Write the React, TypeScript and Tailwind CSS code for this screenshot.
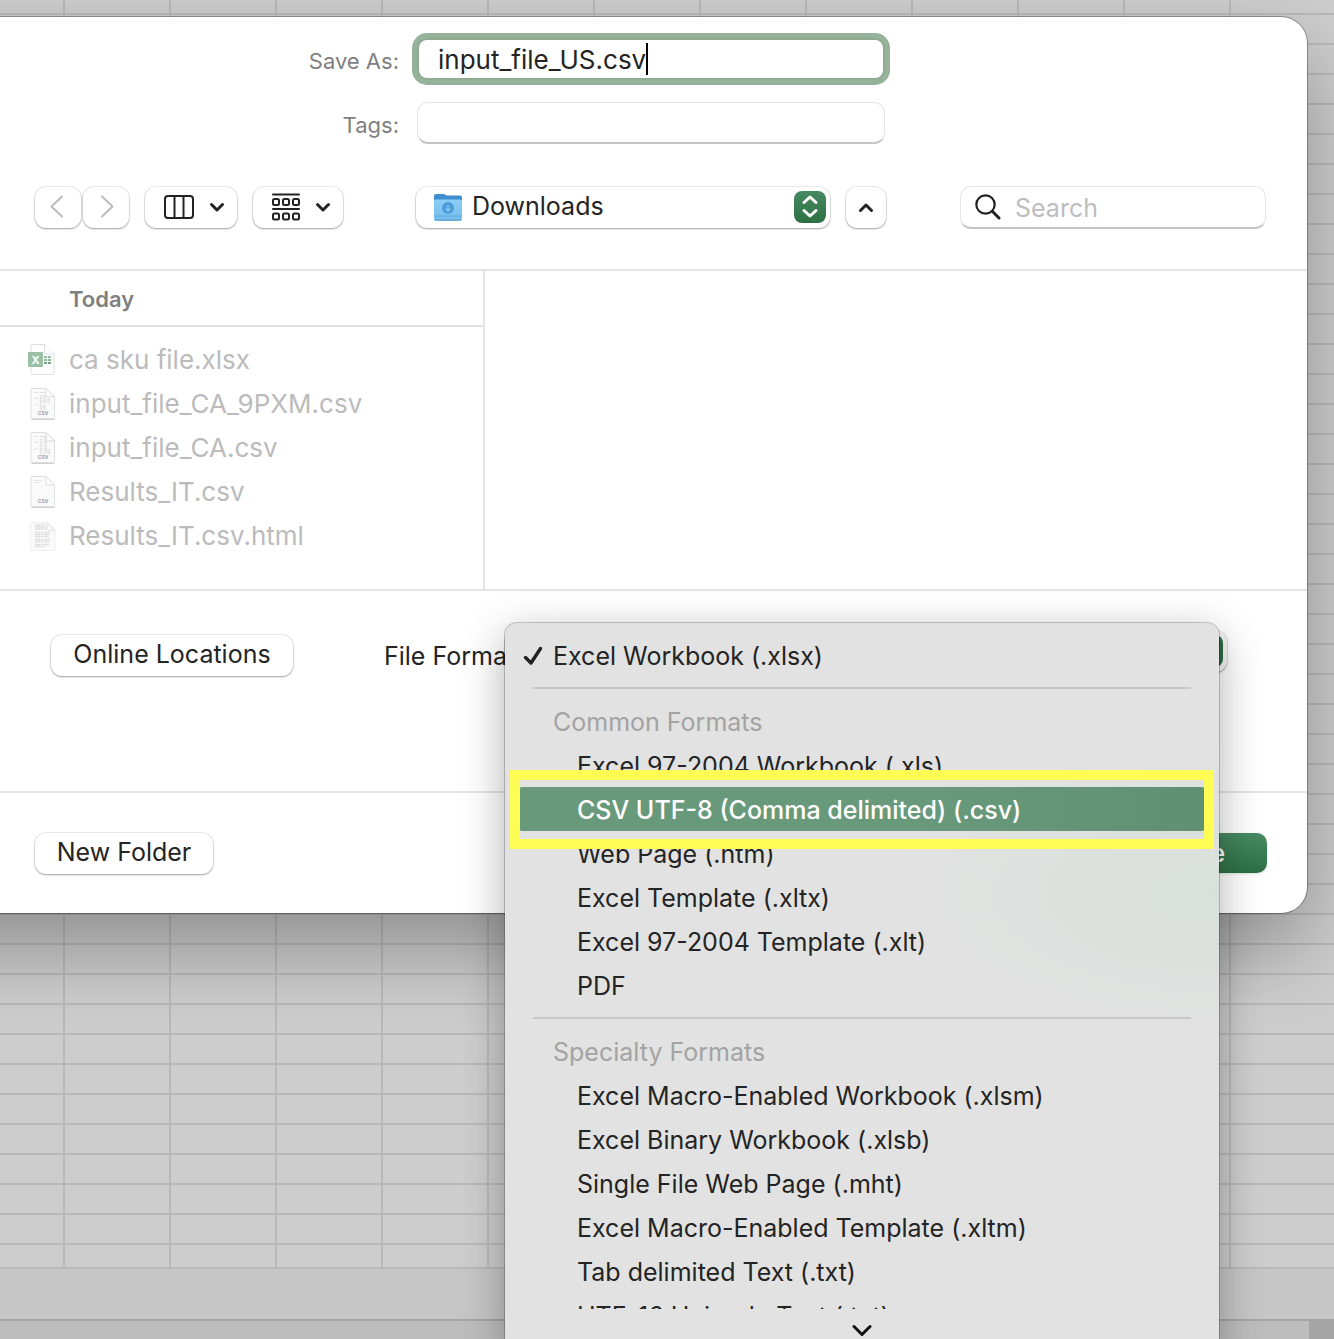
import React from "react";

const cardShadow =
  "shadow-[0_0_0_1px_rgba(0,0,0,0.07),0_1px_2px_rgba(0,0,0,0.32)]";
const fieldBorder =
  "rounded-[11px] border border-[#e6e6e6] border-b-2 border-b-[#c4c4c4] bg-white";

function Chevron({ d, w, h, sw, color }: { d: string; w: number; h: number; sw: number; color: string }) {
  return (
    <svg width={w} height={h} viewBox={`0 0 ${w} ${h}`} fill="none" stroke={color} strokeWidth={sw} strokeLinecap="round" strokeLinejoin="round" aria-hidden="true">
      <path d={d} />
    </svg>
  );
}

function DownChevron() {
  return <Chevron d="M2.500 2.500 8 8l5.500-5.500" w={16} h={11} sw={3} color="#222" />;
}

function ColumnsIcon() {
  return (
    <svg width="30" height="24" viewBox="0 0 30 24" fill="none" stroke="#222" strokeWidth="2" aria-hidden="true">
      <rect x="1" y="1" width="28" height="22" rx="3" />
      <path d="M10.500 1v22M19.500 1v22" />
    </svg>
  );
}

function GroupIcon() {
  return (
    <svg width="28" height="28" viewBox="0 0 28 28" fill="none" stroke="#222" strokeWidth="2" strokeLinecap="round" aria-hidden="true">
      <path d="M1 1.500h26M1 16h26" />
      {[1, 11, 21].map((x) => (
        <React.Fragment key={x}>
          <rect x={x} y="6" width="6" height="6" rx="1.500" />
          <rect x={x} y="20.500" width="6" height="6" rx="1.500" />
        </React.Fragment>
      ))}
    </svg>
  );
}

function FolderIcon() {
  return (
    <svg width="30" height="29" viewBox="0 0 30 29" aria-hidden="true">
      <defs>
        <linearGradient id="folder" x1="0" y1="0" x2="0" y2="1">
          <stop offset="0" stopColor="#8bcdf5" />
          <stop offset="1" stopColor="#74bdec" />
        </linearGradient>
      </defs>
      <path d="M1 3a2 2 0 0 1 2-2h7.500c1.500 0 2 1.500 3.500 1.500h13a2 2 0 0 1 2 2V10H1z" fill="#3f8fd0" />
      <path d="M1 8.500Q1 6.500 3 6.500H27Q29 6.500 29 8.500V26a1.500 1.500 0 0 1-1.500 1.500h-25A1.500 1.500 0 0 1 1 26z" fill="url(#folder)" />
      <path d="M1.500 23h27" stroke="#5ea9dc" strokeWidth="1" />
      <path d="M2 27.200h26" stroke="#4c93c4" strokeWidth="1" />
      <circle cx="15" cy="15" r="6" fill="#4b9bdb" />
      <path d="M15 11.800v6M12.600 15.500 15 18l2.400-2.500" fill="none" stroke="#85c5f0" strokeWidth="1.400" />
    </svg>
  );
}

function SearchIcon() {
  return (
    <svg width="26" height="26" viewBox="0 0 26 26" fill="none" stroke="#222" aria-hidden="true">
      <circle cx="10.500" cy="10.500" r="9.200" strokeWidth="2.200" />
      <path d="M17.300 17.300 24 24" strokeWidth="3" strokeLinecap="round" />
    </svg>
  );
}

type Kind = "xlsx" | "csv-a" | "csv-b" | "csv-c" | "html";

function FileIcon({ kind }: { kind: Kind }) {
  if (kind === "xlsx") {
    return (
      <svg width="29" height="34" viewBox="0 0 29 34" aria-hidden="true">
        <path d="M5 1.500h12.500L27 11v19.500a1 1 0 0 1-1 1H5a1 1 0 0 1-1-1v-28a1 1 0 0 1 1-1z" fill="#fff" stroke="#dedede" />
        <path d="M17.500 1.500V9q0 2 2 2H27" fill="#fff" stroke="#dedede" />
        <g fill="#8fbb9d">
          <path d="M17 13h3v2h-3zM21 13h3v2h-3zM17 16h3v2h-3zM21 16h3v2h-3z" />
          <path d="M17 19h3v2h-3zM21 19h3v2h-3z" fill="#7a9f88" />
        </g>
        <rect x="1" y="9" width="15" height="15" rx="1" fill="#9bc0a6" />
        <text x="8.500" y="20.500" textAnchor="middle" fontFamily="Inter" fontWeight="700" fontSize="11" fill="#fff">X</text>
      </svg>
    );
  }
  if (kind === "html") {
    return (
      <svg width="29" height="34" viewBox="0 0 29 34" aria-hidden="true">
        <path d="M5 3.500h15L28 11v19a1.500 1.500 0 0 1-1.500 1.500H5A1.500 1.500 0 0 1 3.500 30V5A1.500 1.500 0 0 1 5 3.500z" fill="#fafafa" stroke="#efefef" />
        <path d="M20 4v5.500q0 1.500 1.500 1.500h6z" fill="#fff" stroke="#e0e0e0" />
        <g stroke="#e0e0e0" strokeWidth="1.400" strokeDasharray="5 0.600 3 0.500">
          <path d="M8 6h10M8 8h11M8 10h11M8 13.500h15.500M8 15.500h15M8 17.500h14M8 20.500h15.500M8 22.500h15M8 25.500h15M8 27.500h10" />
        </g>
      </svg>
    );
  }
  return (
    <svg width="29" height="34" viewBox="0 0 29 34" aria-hidden="true">
      <path d="M4.500 32.200h23" stroke="#c4c4c4" strokeWidth="1.200" />
      <path d="M5 1.500H19L27.500 10v20.500a1 1 0 0 1-1 1H5a1 1 0 0 1-1-1v-28a1 1 0 0 1 1-1z" fill="#fafafa" stroke="#e0e0e0" />
      <path d="M19 1.500V9q0 1 1 1H27.500z" fill="#fff" stroke="#dadada" />
      <g stroke="#e0e0e0" strokeWidth="1.200">
        {kind === "csv-c" ? (
          <path d="M7.500 5.500h7M7.500 7.500h6" strokeDasharray="3 1" />
        ) : (
          <>
            <path d="M7.500 5.500h4M7.500 11.500h3M7.500 18h3M13 5.500h5" />
            <path d="M14 8v15" strokeWidth="2.500" strokeDasharray="1.500 0.700" />
            <path d={kind === "csv-a" ? "M17.500 8v8M21.500 12v4M17.500 18v5" : "M18.500 5v7M18.500 12v11M22 18v5"} strokeWidth="3" strokeDasharray="1.500 0.700" />
          </>
        )}
      </g>
      <text x="16" y="28" textAnchor="middle" fontFamily="Inter" fontWeight="600" fontSize="5" fill="#8e8e8e">CSV</text>
    </svg>
  );
}

const files: { name: string; kind: Kind }[] = [
  { name: "ca sku file.xlsx", kind: "xlsx" },
  { name: "input_file_CA_9PXM.csv", kind: "csv-a" },
  { name: "input_file_CA.csv", kind: "csv-b" },
  { name: "Results_IT.csv", kind: "csv-c" },
  { name: "Results_IT.csv.html", kind: "html" },
];

const selectedFormat = "CSV UTF-8 (Comma delimited) (.csv)";
const groups = [
  {
    title: "Common Formats",
    items: [
      "Excel 97-2004 Workbook (.xls)",
      selectedFormat,
      "Web Page (.htm)",
      "Excel Template (.xltx)",
      "Excel 97-2004 Template (.xlt)",
      "PDF",
    ],
  },
  {
    title: "Specialty Formats",
    items: [
      "Excel Macro-Enabled Workbook (.xlsm)",
      "Excel Binary Workbook (.xlsb)",
      "Single File Web Page (.mht)",
      "Excel Macro-Enabled Template (.xltm)",
      "Tab delimited Text (.txt)",
      "UTF-16 Unicode Text (.txt)",
    ],
  },
];

function Sheet() {
  return (
    <div aria-hidden="true" className="absolute inset-0 flex flex-col bg-[#bdbdbd]">
      <div className="flex-1 border-b-2 border-[#b9b9b9] bg-[#cdcdcd] [background-image:repeating-linear-gradient(to_bottom,transparent_0_13px,#b9b9b9_13px_15px,transparent_15px_30px),repeating-linear-gradient(to_right,transparent_0_63px,#b9b9b9_63px_65px,transparent_65px_106px)]" />
      <div className="h-[50px] bg-[#c6c6c6]" />
      <div className="flex h-5 justify-end border-t-2 border-[#a5a5a5]">
        <div className="w-[25px] bg-[#a5a5a5]" />
      </div>
    </div>
  );
}

const menuRow = "flex h-11 w-full items-center pt-[2px] text-left";

function FormatMenu() {
  return (
    <div
      role="menu"
      aria-label="File Format"
      className="absolute -top-2 left-0 z-10 flex h-[726px] w-[714px] flex-col rounded-t-[12px] bg-[#e2e2e2] bg-[radial-gradient(ellipse_340px_150px_at_100%_270px,#d9e0db,transparent)] pt-[10px] shadow-[0_0_0_1px_rgba(0,0,0,0.2),0_12px_44px_rgba(0,0,0,0.32)]"
    >
      <div className="h-[676px] overflow-hidden">
        <button type="button" role="menuitemradio" aria-checked="true" className={`pl-[18px] ${menuRow}`}>
          <svg width="20" height="20" viewBox="0 0 20 20" fill="none" stroke="#222" strokeWidth="3.400" strokeLinecap="round" strokeLinejoin="round" aria-hidden="true">
            <path d="M2.500 11.500 8 17 17.500 2.500" />
          </svg>
          <span className="ml-[10px]">Excel Workbook (.xlsx)</span>
        </button>
        {groups.map((g) => (
          <div key={g.title} role="group" aria-label={g.title}>
            <div className="mx-7 my-[10px] h-[2px] bg-[#c6c6c6]" />
            <div className={`pl-12 text-[#a3a3a3] ${menuRow}`}>{g.title}</div>
            {g.items.map((item) =>
              item === selectedFormat ? (
                <div key={item} className="relative z-10 px-[10px]">
                  <button type="button" role="menuitemradio" aria-checked="false" className={`rounded-[8px] bg-gradient-to-r from-[#69997b] from-60% to-[#5e9071] pl-[62px] font-medium text-white ${menuRow}`}>
                    {item}
                  </button>
                  <div className="pointer-events-none absolute -top-[17px] -bottom-[18px] inset-x-[5px] border-[10px] border-[#fffc54]" />
                </div>
              ) : (
                <button key={item} type="button" role="menuitemradio" aria-checked="false" className={`pl-[72px] ${menuRow}`}>
                  {item}
                </button>
              ),
            )}
          </div>
        ))}
      </div>
      <div className="flex justify-center pt-[15px]">
        <Chevron d="M2 2.500 10 10.500l8-8" w={20} h={13} sw={3} color="#111" />
      </div>
    </div>
  );
}

const pushButton = `flex h-[41px] items-center justify-center rounded-[11px] bg-white ${cardShadow}`;

export default function App() {
  return (
    <div className="relative min-h-screen overflow-hidden pt-[17px] font-['Inter',sans-serif] text-[25px] leading-8 text-[#242424]">
      <Sheet />
      <form
        aria-label="Save"
        onSubmit={(e) => e.preventDefault()}
        className="relative mr-[27px] -ml-[120px] rounded-r-[26px] bg-white pl-[120px] shadow-[0_0_0_1px_rgba(0,0,0,0.3),0_36px_80px_rgba(0,0,0,0.3)]"
      >
        <div className="grid grid-cols-[399px_468px] gap-x-[18px] gap-y-[22px] pt-[21px]">
          <label htmlFor="name" className="self-center pt-[3px] text-right text-[22px] text-[#808080]">Save As:</label>
          <div className="flex h-[42px] items-center rounded-[10px] border-2 border-[#8fac93] bg-white pl-[19px] shadow-[0_0_0_5px_#97b29a]">
            <input id="name" defaultValue="input_file_US.csv" className="field-sizing-content pt-[2px] text-[26px] outline-none" />
            <span className="h-8 w-[2px] bg-black" />
          </div>
          <label htmlFor="tags" className="self-center pt-[3px] text-right text-[22px] text-[#808080]">Tags:</label>
          <input id="tags" className={`h-[42px] px-4 outline-none ${fieldBorder}`} />
        </div>

        <div className="mt-[42px] flex h-[42px] items-center pr-[41px] pl-[35px]">
          <div className="flex gap-[2px]">
            <button type="button" aria-label="Back" className={`w-[46px] pr-[2px] pb-[2px] ${pushButton}`}>
              <Chevron d="M12 1.500 1.500 11.500 12 21.500" w={14} h={23} sw={2} color="#bcbcbc" />
            </button>
            <button type="button" aria-label="Forward" className={`w-[46px] pb-[2px] pl-[2px] ${pushButton}`}>
              <Chevron d="M2 1.500 12.500 11.500 2 21.500" w={14} h={23} sw={2} color="#bcbcbc" />
            </button>
          </div>
          <button type="button" aria-label="Column view" className={`ml-4 w-[92px] gap-[15px] pl-[6px] ${pushButton}`}>
            <ColumnsIcon />
            <DownChevron />
          </button>
          <button type="button" aria-label="Group items" className={`ml-4 w-[90px] gap-[15px] pl-[6px] ${pushButton}`}>
            <GroupIcon />
            <DownChevron />
          </button>
          <div className="relative ml-[73px]">
            <select aria-label="Folder" className={`h-[41px] w-[414px] appearance-none rounded-[11px] bg-white pb-[2px] pl-14 outline-none ${cardShadow}`}>
              <option>Downloads</option>
            </select>
            <span className="pointer-events-none absolute top-[6px] left-[17px]">
              <FolderIcon />
            </span>
            <span className="pointer-events-none absolute top-1 right-1 flex h-8 w-8 flex-col items-center justify-center gap-[3px] rounded-[8px] bg-gradient-to-b from-[#478a62] to-[#2c7043]">
              <Chevron d="M2 7.500 8 2l6 5.500" w={16} h={10} sw={3} color="#fff" />
              <Chevron d="M2 2.500 8 8l6-5.500" w={16} h={10} sw={3} color="#fff" />
            </span>
          </div>
          <button type="button" aria-label="Collapse" className={`ml-4 w-10 ${pushButton}`}>
            <Chevron d="M2.500 8.500 8 3l5.500 5.500" w={16} h={11} sw={3} color="#222" />
          </button>
          <label className={`ml-auto flex h-[43px] w-[306px] items-center gap-[14px] pl-[14px] ${fieldBorder}`}>
            <SearchIcon />
            <input type="search" aria-label="Search" placeholder="Search" className="w-[220px] pt-[2px] outline-none placeholder:text-[#bdbdbd]" />
          </label>
        </div>

        <div className="mt-[41px] flex h-[322px] border-y-2 border-[#e4e4e4]">
          <div className="w-[485px] border-r-2 border-[#e4e4e4]">
            <div className="flex h-14 items-center border-b-2 border-[#e0e0e0] pt-[2px] pl-[69px] text-[22px] font-semibold text-[#808080]">Today</div>
            <ul className="pt-[11px] text-[26px] text-[#bbbbbb]">
              {files.map((f) => (
                <li key={f.name} className="flex h-11 items-center gap-[13px] pl-[27px]">
                  <FileIcon kind={f.kind} />
                  {f.name}
                </li>
              ))}
            </ul>
          </div>
          <div className="flex-1" />
        </div>

        <div className="flex h-[202px] items-start border-b-2 border-[#e4e4e4] pt-[44px]">
          <button type="button" className={`ml-[51px] w-[242px] pb-1 ${pushButton}`}>Online Locations</button>
          <div className="relative ml-[91px] flex-1">
            <label htmlFor="format" className="flex h-[42px] items-center">File Format:</label>
            <div className="absolute -top-1 right-[80px] left-[121px]">
              <select id="format" className={`h-[41px] w-full appearance-none rounded-[11px] bg-[#f4f4f4] pl-4 outline-none ${cardShadow}`}>
                <option>Excel Workbook (.xlsx)</option>
              </select>
              <span className="pointer-events-none absolute top-1 right-1 h-8 w-8 rounded-[8px] bg-[#2c6b42]" />
              <FormatMenu />
            </div>
          </div>
        </div>

        <div className="flex h-[120px] justify-between pt-10 pr-10 pl-[35px]">
          <button type="button" className={`w-[178px] pb-1 ${pushButton}`}>New Folder</button>
          <button type="submit" className="h-10 w-[138px] rounded-[10px] bg-gradient-to-b from-[#478a62] to-[#2c7043] pr-1 text-center font-medium text-white shadow-sm">Save</button>
        </div>
      </form>
    </div>
  );
}
